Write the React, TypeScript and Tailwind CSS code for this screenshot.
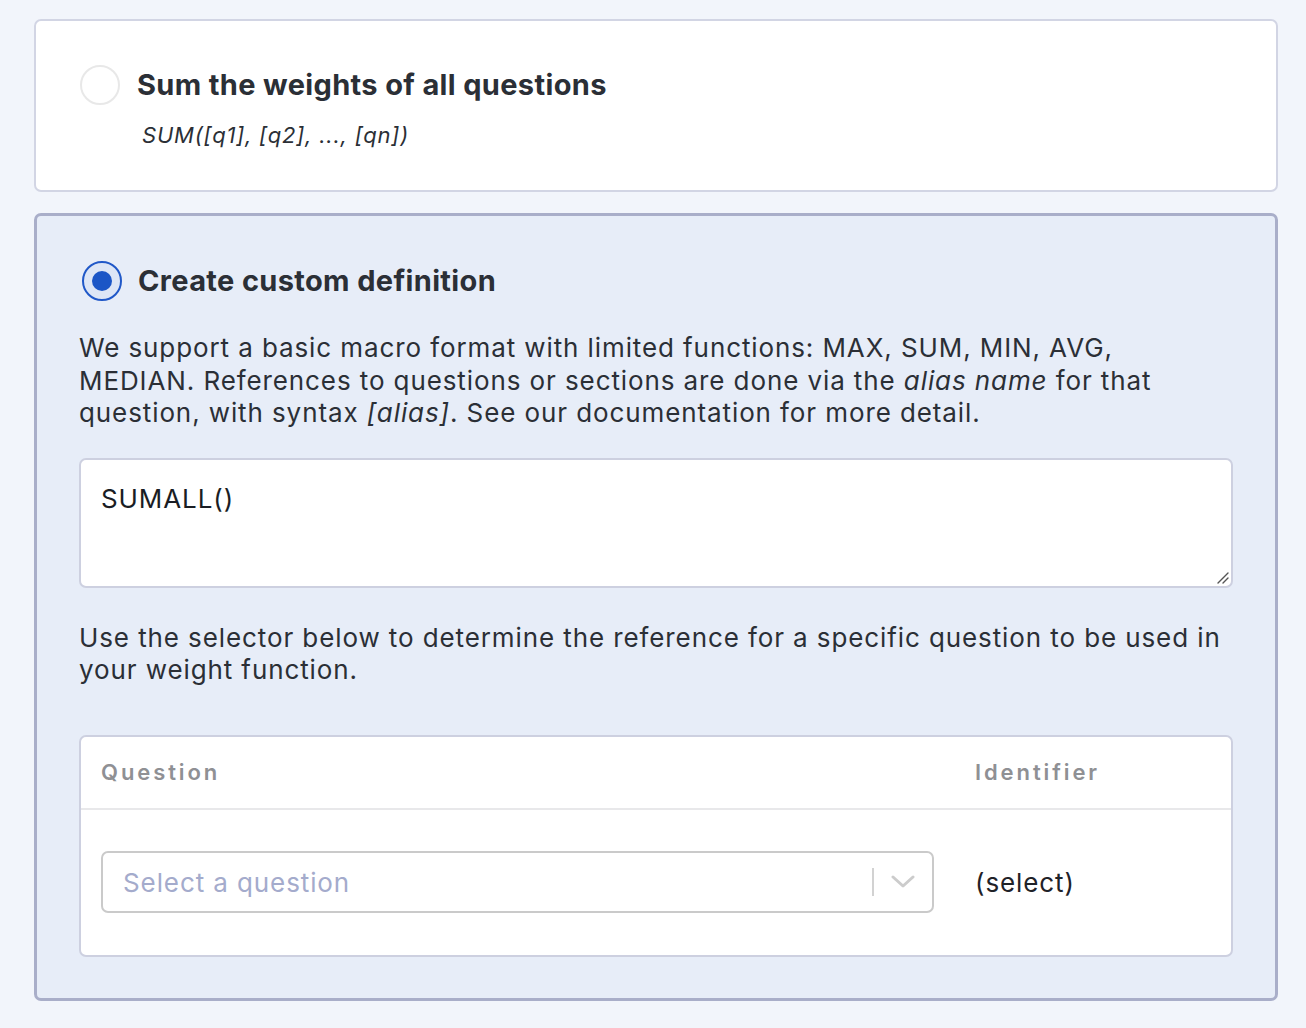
export default function App() {
  return (
    <div className="h-[1028px] overflow-hidden bg-[#f2f5fb] pl-[34px] pt-[19px] font-['Inter','Noto_Sans',sans-serif] text-[#2b2f36]">
      <div className="flex w-[1244px] flex-col gap-[21px]">
        {/* option 1 */}
        <div className="rounded-[7px] border-2 border-[#d2d5e4] bg-white px-[44px] pt-[44px] pb-[40px]">
          <div className="flex items-center gap-[17px]">
            <span className="h-[40px] w-[40px] shrink-0 rounded-full border-2 border-[#e8e8e8] bg-white" />
            <span className="text-[29px] font-bold leading-[40px] tracking-[0.35px]">Sum the weights of all questions</span>
          </div>
          <div className="mt-[15px] pl-[62px] text-[22px] italic leading-[30px] tracking-[0.8px] text-[#2b2f36]">SUM([q1], [q2], ..., [qn])</div>
        </div>

        {/* option 2 */}
        <div className="rounded-[7px] border-[3px] border-[#a9aec9] bg-[#e7edf8] px-[42px] pt-[45px] pb-[41px]">
          <div className="flex items-center gap-[16px] pl-[3px]">
            <span className="flex h-[40px] w-[40px] shrink-0 items-center justify-center rounded-full border-2 border-[#2058c8] bg-[#dde6f6]">
              <span className="h-[20px] w-[20px] rounded-full bg-[#1b56c6]" />
            </span>
            <span className="text-[29px] font-bold leading-[40px] tracking-[0.35px]">Create custom definition</span>
          </div>

          <p className="mt-[31px] max-w-[1100px] text-[26px] leading-[32.5px] tracking-[0.9px]">
            We support a basic macro format with limited functions: MAX, SUM, MIN, AVG, MEDIAN. References to questions or sections are done via the <em>alias name</em> for that question, with syntax <em>[alias]</em>. See our documentation for more detail.
          </p>

          <div className="relative mt-[28px] h-[130px] rounded-[7px] border-2 border-[#cdd0e0] bg-white px-[20px] pt-[23px]">
            <div className="text-[26px] leading-[32px] tracking-[0.9px] text-[#1a1d24]">SUMALL()</div>
            <svg className="absolute right-[2px] bottom-[2px]" width="14" height="14" viewBox="0 0 14 14">
              <path d="M13 3 L3 13 M13 8 L8 13" stroke="#555" strokeWidth="1.4" strokeLinecap="round" />
            </svg>
          </div>

          <p className="mt-[34px] text-[26px] leading-[32.5px] tracking-[0.9px]">
            Use the selector below to determine the reference for a specific question to be used in your weight function.
          </p>

          <div className="mt-[48px] rounded-[7px] border-2 border-[#cdd0e0] bg-white">
            <div className="flex h-[73px] items-center border-b-2 border-[#e8e8ea] pl-[20px] text-[22px] font-semibold tracking-[2.9px] text-[#8f9094]">
              <span className="w-[874px]">Question</span>
              <span>Identifier</span>
            </div>
            <div className="flex h-[145px] items-center pl-[20px]">
              <div className="flex h-[62px] w-[833px] items-center rounded-[7px] border-2 border-[#cacaca] bg-white pl-[20px]">
                <span className="flex-1 text-[26px] tracking-[0.9px] text-[#a4abcc]">Select a question</span>
                <span className="h-[28px] w-[2px] bg-[#d2d2d2]" />
                <svg className="mx-[17px]" width="24" height="14" viewBox="0 0 24 14">
                  <path d="M2 2 L12 11 L22 2" fill="none" stroke="#cccccc" strokeWidth="3" strokeLinecap="round" strokeLinejoin="round" />
                </svg>
              </div>
              <span className="ml-[41px] text-[26px] tracking-[0.9px] text-[#1f2228]">(select)</span>
            </div>
          </div>
        </div>
      </div>
    </div>
  );
}
